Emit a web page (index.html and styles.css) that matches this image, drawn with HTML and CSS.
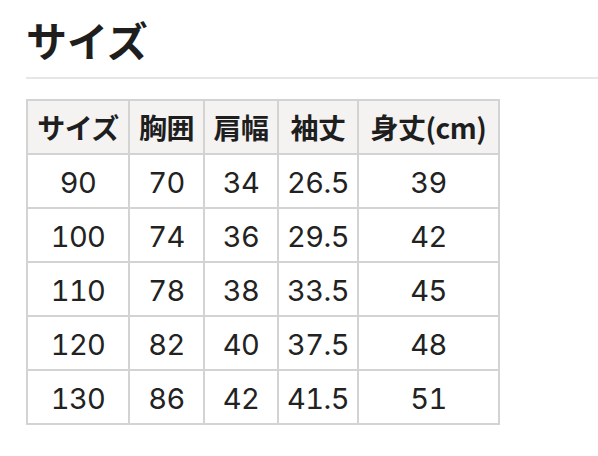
FILE: index.html
```html
<!DOCTYPE html>
<html lang="ja">
<head>
<meta charset="utf-8">
<link rel="stylesheet" href="styles.css">
</head>
<body>
<div class="page">
  <h1 class="title">サイズ</h1>
  <div class="rule"></div>
  <table class="size-table">
    <colgroup>
      <col class="c1"><col class="c2"><col class="c3"><col class="c4"><col class="c5">
    </colgroup>
    <thead>
      <tr><th>サイズ</th><th>胸囲</th><th>肩幅</th><th>袖丈</th><th>身丈(cm)</th></tr>
    </thead>
    <tbody>
      <tr><td>90</td><td>70</td><td>34</td><td>26.5</td><td>39</td></tr>
      <tr><td>100</td><td>74</td><td>36</td><td>29.5</td><td>42</td></tr>
      <tr><td>110</td><td>78</td><td>38</td><td>33.5</td><td>45</td></tr>
      <tr><td>120</td><td>82</td><td>40</td><td>37.5</td><td>48</td></tr>
      <tr><td>130</td><td>86</td><td>42</td><td>41.5</td><td>51</td></tr>
    </tbody>
  </table>
</div>
</body>
</html>
```

FILE: styles.css
```css
html, body {
  margin: 0;
  padding: 0;
  background: #fff;
}
body {
  font-family: "Noto Sans CJK JP", "Noto Sans", sans-serif;
  color: #222;
}
.page {
  padding: 14px 0 0 26px;
}
.title {
  margin: 0;
  font-size: 41px;
  line-height: 50px;
  font-weight: 700;
  color: #1e1e1e;
}
.rule {
  height: 2px;
  background: #e6e6e6;
  margin-top: 13px;
  margin-bottom: 20px;
}
.size-table {
  border-collapse: collapse;
  table-layout: fixed;
  width: 474px;
}
.c1 { width: 102px; }
.c2 { width: 75px; }
.c3 { width: 74px; }
.c4 { width: 80px; }
.c5 { width: 141px; }
.size-table th,
.size-table td {
  border: 2px solid #d3d3d3;
  height: 52px;
  padding: 0;
  text-align: center;
  vertical-align: middle;
  line-height: 1;
  white-space: nowrap;
}
.size-table th {
  background: #f4f3f2;
  font-weight: 700;
  font-size: 28px;
  color: #1e1e1e;
  letter-spacing: -0.5px;
}
.size-table td {
  font-family: "Inter", "Noto Sans CJK JP", sans-serif;
  font-variant-numeric: tabular-nums;
  font-feature-settings: "tnum" 1;
  font-weight: 400;
  font-size: 29px;
  color: #222;
  letter-spacing: -0.6px;
  height: 50px;
  padding-top: 2px;
}
```
